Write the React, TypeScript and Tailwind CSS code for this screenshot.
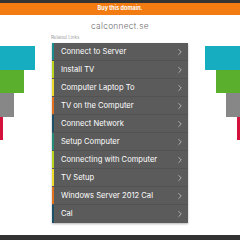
import { ChevronRight } from "lucide-react";

const links = [
  { label: "Connect to Server", color: "bg-[#1b8c8e]" },
  { label: "Install TV", color: "bg-[#b8d41c]" },
  { label: "Computer Laptop To", color: "bg-[#ecd928]" },
  { label: "TV on the Computer", color: "bg-[#e2711d]" },
  { label: "Connect Network", color: "bg-[#1c4f68]" },
  { label: "Setup Computer", color: "bg-[#248b78]" },
  { label: "Connecting with Computer", color: "bg-[#b8d41c]" },
  { label: "TV Setup", color: "bg-[#ecd928]" },
  { label: "Windows Server 2012 Cal", color: "bg-[#e2711d]" },
  { label: "Cal", color: "bg-[#1c4f68]" },
];

// stepped decoration bars on both sides
const bars = [
  { w: "w-[35px]", color: "bg-[#16adc0]" },
  { w: "w-[24px]", color: "bg-[#5aaf2c]" },
  { w: "w-[14px]", color: "bg-[#878787]" },
  { w: "w-[3px]", color: "bg-[#d3113a]" },
];

export default function App() {
  return (
    <div
      className="w-[240px] h-[240px] bg-white flex flex-col overflow-hidden"
      style={{ fontFamily: "Inter, 'Noto Sans', sans-serif" }}
    >
      <div className="h-[3px] bg-[#333333]" />
      <div className="h-[12px] bg-[#f27b12] flex items-center justify-center">
        <span className="text-[5.5px] font-bold text-white leading-none">Buy this domain.</span>
      </div>

      <div className="h-[21px] flex items-center justify-center pt-[1px]">
        <span className="text-[8.3px] text-[#6a6a6a] font-light leading-none tracking-[0.3px]">
          calconnect.se
        </span>
      </div>

      <div className="flex">
        <div className="w-[52px] flex flex-col items-start pt-[10px]">
          {bars.map((b) => (
            <div key={b.color} className={`${b.w} ${b.color} h-[23.5px]`} />
          ))}
        </div>

        <div className="w-[136px] flex flex-col">
          <div className="h-[7px] text-[4.5px] text-[#9a9a9a] leading-none -ml-[1px]">Related Links</div>
          <div className="bg-[#5b5b5b] shadow-[0_1px_2px_rgba(0,0,0,0.3)]">
            {links.map((l) => (
              <div key={l.label} className="h-[18px] flex border-b border-[#535353] last:border-b-0">
                <div className={`w-[2px] ${l.color}`} />
                <div className="flex-1 flex items-center pl-[7px] pr-[3px]">
                  <span className="flex-1 text-[7.6px] text-white leading-none whitespace-nowrap">{l.label}</span>
                  <ChevronRight className="w-[10px] h-[10px] text-[#dddddd]" strokeWidth={1.6} />
                </div>
              </div>
            ))}
          </div>
        </div>

        <div className="w-[52px] flex flex-col items-end pt-[10px]">
          {bars.map((b) => (
            <div key={b.color} className={`${b.w} ${b.color} h-[23.5px]`} />
          ))}
        </div>
      </div>

      <div className="flex-1" />
      <div className="h-[5px] bg-[#333333]" />
    </div>
  );
}
